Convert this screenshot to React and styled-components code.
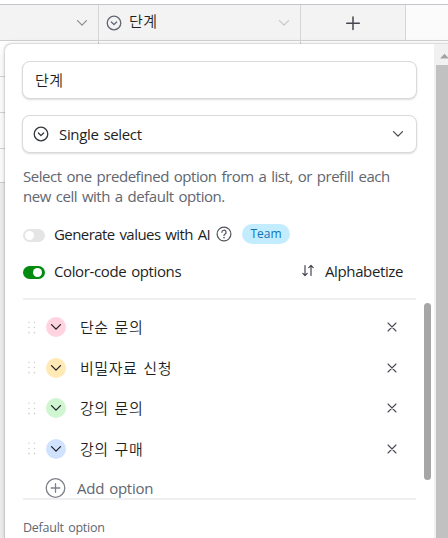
import React, { useState } from "react";
import styled, { createGlobalStyle } from "styled-components";

const GlobalStyle = createGlobalStyle`
    * {
        box-sizing: border-box;
    }

    body {
        margin: 0;
        overflow: hidden;
        background: #fff;
        font-family: "Open Sans", "Noto Sans CJK KR", sans-serif;
        color: #1d1f25;
    }
`;

const Page = styled.div`
    position: relative;
    width: 448px;
    height: 538px;
    overflow: hidden;
    padding-top: 4px;
    background: #fff;
`;

const GridHeader = styled.div`
    display: grid;
    grid-template-columns: 99px 202px 105px 1fr;
    height: 37px;
    border-top: 1px solid #c4c5cb;
    border-bottom: 1px solid #cfcfd1;
    background: #fbfbfb;
`;

const HeaderCell = styled.div`
    display: flex;
    align-items: center;
    justify-content: ${({ $justify }) => $justify || "flex-start"};
    padding: 0 10px 0 7px;
    border-right: 1px solid #d6d6d8;
    background: #f3f3f3;
    color: #616670;
`;

const GridBody = styled.div`
    height: 142px;
    border-bottom: 1px solid #cfcfcf;
`;

const GridRow = styled.div`
    display: grid;
    grid-template-columns: 99px 202px 1fr;
    height: 36px;
    border-bottom: 1px solid #d6d6d6;
`;

const GridCell = styled.div`
    border-right: 1px solid #d6d6d6;
`;

const GridEmpty = styled.div`
    height: 360px;
    background: #f1f1f1;
`;

const Popover = styled.div`
    position: absolute;
    top: 44px;
    left: 5px;
    display: flex;
    width: 446px;
    height: 520px;
    border-radius: 6px 0 0 0;
    background: #fff;
    box-shadow: 0 0 1px rgba(0, 0, 0, 0.4), 0 0 3px rgba(0, 0, 0, 0.22), 0 4px 12px rgba(0, 0, 0, 0.12);
`;

const Content = styled.div`
    display: flex;
    flex-direction: column;
    width: 429px;
    padding: 17px 17px 0;
`;

const Field = styled.div`
    display: flex;
    align-items: center;
    height: 38px;
    flex: none;
    margin-bottom: ${({ $gap }) => $gap}px;
    padding: 0 12px 0 ${({ $indent }) => $indent}px;
    border: 1px solid #dadada;
    border-radius: 8px;
    background: #fff;
    box-shadow: 0 1px 2px rgba(0, 0, 0, 0.14);
`;

const Text = styled.span`
    font-size: ${({ $size }) => $size || 15}px;
    letter-spacing: ${({ $track }) => $track ?? -0.38}px;
    word-spacing: 1.4px;
    line-height: 20px;
    white-space: pre;
    color: ${({ $color }) => $color || "#1d1f25"};
`;

const KoreanText = styled(Text)`
    font-family: "Noto Sans CJK KR", sans-serif;
    font-weight: 350;
    letter-spacing: 0.55px;
    word-spacing: 2px;
`;

const HeaderName = styled(KoreanText)`
    flex: 1;
    margin: -3px 0 0 7px;
`;

const SelectLabel = styled(Text)`
    flex: 1;
    margin-left: 10px;
`;

const Description = styled.div`
    display: flex;
    flex-direction: column;
    height: 40px;
    margin: -1px 1px 18px;
`;

const SettingRow = styled.div`
    display: flex;
    align-items: center;
    height: 20px;
    margin: 0 14px ${({ $gap }) => $gap}px 1px;
`;

const Toggle = styled.button`
    display: flex;
    flex: none;
    justify-content: ${({ $on }) => ($on ? "flex-end" : "flex-start")};
    align-items: center;
    width: 22px;
    height: 13px;
    margin: 2px 9px 0 0;
    padding: 0 3px 0 2px;
    border: none;
    border-radius: 7px;
    background: ${({ $on }) => ($on ? "#048a0e" : "#e5e5e5")};
`;

const Knob = styled.span`
    width: 9px;
    height: 9px;
    border-radius: 50%;
    background: #fff;
`;

const AiLabel = styled(Text)`
    width: 162px;
`;

const Badge = styled.span`
    display: flex;
    align-items: center;
    justify-content: center;
    width: 48px;
    height: 20px;
    margin-left: 10px;
    border-radius: 10px;
    background: #c4ecff;
`;

const SortButton = styled.div`
    display: flex;
    align-items: center;
    gap: 10px;
    height: 20px;
    margin: 0 0 0 auto;
`;

const OptionPanel = styled.div`
    position: relative;
    height: 202px;
    flex: none;
    margin: 0 1px;
    padding-top: 17px;
    border-top: 2px solid #f0f0f0;
    border-bottom: 2px solid #f0f0f0;
`;

const OptionRow = styled.div`
    display: flex;
    align-items: center;
    height: 20px;
    margin-bottom: 20.6px;
    padding: 0 19px 0 5px;
`;

const ColorDot = styled.span`
    display: flex;
    align-items: center;
    justify-content: center;
    width: 20px;
    height: 20px;
    margin: 0 14px 0 10px;
    border-radius: 50%;
    background: ${({ $color }) => $color};
`;

const OptionName = styled(KoreanText)`
    flex: 1;
`;

const AddRow = styled.div`
    display: flex;
    align-items: center;
    height: 20px;
    margin-top: -1px;
    padding-left: 22px;
    gap: 11px;
`;

const PanelThumb = styled.div`
    position: absolute;
    top: 3px;
    right: -15px;
    width: 7px;
    height: 177px;
    border-radius: 4px;
    background: #a6a6a6;
`;

const DefaultLabel = styled.div`
    display: flex;
    margin: 18px 1px 0;
`;

const ScrollTrack = styled.div`
    width: 17px;
    padding: 9px 2px 0;
    background: #f1f1f1;
`;

const ScrollThumb = styled.div`
    height: 500px;
    margin-top: 6px;
    background: #c1c1c1;
`;

const Icon = styled.svg`
    display: block;
    flex: none;
    fill: none;
    stroke: currentColor;
    stroke-linecap: round;
    stroke-linejoin: round;
`;

const Chevron = ({ color = "#44474f" }) => (
    <Icon width="12" height="8" viewBox="0 0 12 8" color={color} strokeWidth="1.3">
        <path d="M1.5 1.6 6 6.1l4.5-4.5" />
    </Icon>
);

const SelectIcon = ({ color }) => (
    <Icon width="16" height="16" viewBox="0 0 16 16" color={color} strokeWidth="1.3">
        <circle cx="8" cy="8" r="6.8" />
        <path d="M5.4 7 8 9.6 10.6 7" />
    </Icon>
);

const HelpIcon = () => (
    <Icon width="16" height="16" viewBox="0 0 16 16" color="#50535b" strokeWidth="1.2">
        <circle cx="8" cy="8" r="6.9" />
        <path d="M5.9 6.3a2.1 2.1 0 1 1 3 1.9c-.6.3-.9.6-.9 1.3" />
        <path d="M8 11.6v.1" strokeWidth="1.5" />
    </Icon>
);

const SortIcon = () => (
    <Icon width="14" height="14" viewBox="0 0 14 14" color="#44474f" strokeWidth="1.2">
        <path d="M4 1.5v10M1.8 9.3 4 11.5l2.2-2.2M10 11.5v-10M7.8 3.7 10 1.5l2.2 2.2" />
    </Icon>
);

const PlusIcon = () => (
    <Icon width="16" height="16" viewBox="0 0 16 16" color="#44474f" strokeWidth="1.5">
        <path d="M9 1.9v12.6M2.7 8.2h12.6" />
    </Icon>
);

const AddIcon = () => (
    <Icon width="21" height="20" viewBox="0 0 21 20" color="#7d8088" strokeWidth="1.3">
        <circle cx="10.5" cy="10" r="9.3" />
        <path d="M10.5 5.7v8.6M6.2 10h8.6" />
    </Icon>
);

const CloseIcon = () => (
    <Icon width="10" height="10" viewBox="0 0 10 10" color="#4a4d55" strokeWidth="1.1">
        <path d="M1 1l8 8M9 1 1 9" />
    </Icon>
);

const DragIcon = () => (
    <Icon width="8" height="13" viewBox="0 0 8 13" color="#cdcdd0" strokeWidth="1.5">
        <path d="M1 1.2v.1M6.5 1.2v.1M1 6.4v.1M6.5 6.4v.1M1 11.6v.1M6.5 11.6v.1" />
    </Icon>
);

const ArrowUp = () => (
    <Icon width="13" height="6" viewBox="0 0 13 6">
        <path d="M4 5.5 8.5.8l4.5 4.7z" fill="#a3a3a3" stroke="none" />
    </Icon>
);

const options = [
    { id: 1, name: "단순 문의", color: "#ffd4e0" },
    { id: 2, name: "비밀자료 신청", color: "#ffeab6" },
    { id: 3, name: "강의 문의", color: "#cff5d1" },
    { id: 4, name: "강의 구매", color: "#d1e2ff" },
];

export default function App() {
    const [useAi, setUseAi] = useState(false);
    const [colorCode, setColorCode] = useState(true);

    return (
        <Page>
            <GlobalStyle />
            <GridHeader>
                <HeaderCell $justify="flex-end">
                    <Chevron color="#8b8e94" />
                </HeaderCell>
                <HeaderCell>
                    <SelectIcon color="#616670" />
                    <HeaderName>단계</HeaderName>
                    <Chevron color="#c6c7ca" />
                </HeaderCell>
                <HeaderCell $justify="center">
                    <PlusIcon />
                </HeaderCell>
            </GridHeader>
            <GridBody>
                {[1, 2, 3].map((row) => (
                    <GridRow key={row}>
                        <GridCell />
                        <GridCell />
                    </GridRow>
                ))}
            </GridBody>
            <GridEmpty />

            <Popover>
                <Content>
                    <Field $indent={12} $gap={16}>
                        <KoreanText>단계</KoreanText>
                    </Field>
                    <Field $indent={10} $gap={14}>
                        <SelectIcon color="#33363d" />
                        <SelectLabel $track={-0.35}>Single select</SelectLabel>
                        <Chevron />
                    </Field>
                    <Description>
                        <Text $track={-0.46} $color="#616670">Select one predefined option from a list, or prefill each</Text>
                        <Text $track={-0.46} $color="#616670">new cell with a default option.</Text>
                    </Description>
                    <SettingRow $gap={17}>
                        <Toggle $on={useAi} onClick={() => setUseAi(!useAi)}>
                            <Knob />
                        </Toggle>
                        <AiLabel $track={-0.56}>Generate values with AI</AiLabel>
                        <HelpIcon />
                        <Badge>
                            <Text $size={12} $track={0} $color="#0b76b7">Team</Text>
                        </Badge>
                    </SettingRow>
                    <SettingRow $gap={17}>
                        <Toggle $on={colorCode} onClick={() => setColorCode(!colorCode)}>
                            <Knob />
                        </Toggle>
                        <Text>Color-code options</Text>
                        <SortButton>
                            <SortIcon />
                            <Text>Alphabetize</Text>
                        </SortButton>
                    </SettingRow>
                    <OptionPanel>
                        {options.map((option) => (
                            <OptionRow key={option.id}>
                                <DragIcon />
                                <ColorDot $color={option.color}>
                                    <Chevron color="#1d1f25" />
                                </ColorDot>
                                <OptionName>{option.name}</OptionName>
                                <CloseIcon />
                            </OptionRow>
                        ))}
                        <AddRow>
                            <AddIcon />
                            <Text $track={-0.25} $color="#616670">Add option</Text>
                        </AddRow>
                        <PanelThumb />
                    </OptionPanel>
                    <DefaultLabel>
                        <Text $size={12.5} $track={-0.25} $color="#616670">Default option</Text>
                    </DefaultLabel>
                </Content>
                <ScrollTrack>
                    <ArrowUp />
                    <ScrollThumb />
                </ScrollTrack>
            </Popover>
        </Page>
    );
}
